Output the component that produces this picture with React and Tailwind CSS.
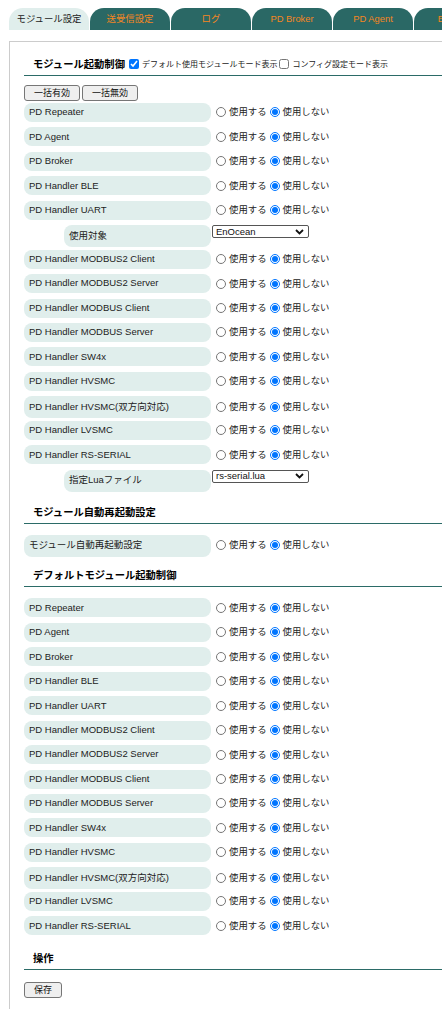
import React from 'react';

const tabs = ['モジュール設定', '送受信設定', 'ログ', 'PD Broker', 'PD Agent', 'BACnet'];

const startupRows = [
  { label: 'PD Repeater' },
  { label: 'PD Agent' },
  { label: 'PD Broker' },
  { label: 'PD Handler BLE' },
  { label: 'PD Handler UART' },
  { label: '使用対象', select: 'EnOcean' },
  { label: 'PD Handler MODBUS2 Client' },
  { label: 'PD Handler MODBUS2 Server' },
  { label: 'PD Handler MODBUS Client' },
  { label: 'PD Handler MODBUS Server' },
  { label: 'PD Handler SW4x' },
  { label: 'PD Handler HVSMC' },
  { label: 'PD Handler HVSMC(双方向対応)' },
  { label: 'PD Handler LVSMC' },
  { label: 'PD Handler RS-SERIAL' },
  { label: '指定Luaファイル', select: 'rs-serial.lua' },
];

const defaultRows = [
  'PD Repeater',
  'PD Agent',
  'PD Broker',
  'PD Handler BLE',
  'PD Handler UART',
  'PD Handler MODBUS2 Client',
  'PD Handler MODBUS2 Server',
  'PD Handler MODBUS Client',
  'PD Handler MODBUS Server',
  'PD Handler SW4x',
  'PD Handler HVSMC',
  'PD Handler HVSMC(双方向対応)',
  'PD Handler LVSMC',
  'PD Handler RS-SERIAL',
];

const isWide = (s) => /[^\x00-\x7f]/.test(s);

function Radios({ name }) {
  return (
    <div className="flex items-center text-[9.4px] text-[#222]">
      <input type="radio" name={name} className="ml-[5px] w-[10px] h-[10px] m-0" />
      <span className="ml-[3px]">使用する</span>
      <input type="radio" name={name} defaultChecked className="ml-[3px] w-[10px] h-[10px] m-0" />
      <span className="ml-[3px]">使用しない</span>
    </div>
  );
}

function Row({ label, name }) {
  const tall = isWide(label);
  return (
    <div className={tall ? 'pb-[2.45px]' : 'pb-[5.45px]'}>
      <div className="flex items-center">
        <div className={`w-[187px] ${tall ? 'h-[22px]' : 'h-[19px]'} rounded-[8px] bg-[#e0eeec] flex items-center pl-[5px] text-[9.5px] text-[#222]`}>
          {label}
        </div>
        <Radios name={name} />
      </div>
    </div>
  );
}

function SelectRow({ label, value }) {
  return (
    <div className="pb-[2.45px] flex items-start">
      <div className="ml-[40px] w-[147px] h-[22px] rounded-[8px] bg-[#e0eeec] flex items-center pl-[5px] text-[9.5px] text-[#222]">
        {label}
      </div>
      <div className="ml-[1px] w-[97px] h-[13px] border border-[#555] rounded-[2px] bg-white flex items-center justify-between pl-[3px] pr-[4px] text-[9.5px] text-[#111] leading-none">
        <span>{value}</span>
        <svg width="9" height="6" viewBox="0 0 9 6">
          <path d="M1 1l3.5 3.5L8 1" fill="none" stroke="#111" strokeWidth="1.8" />
        </svg>
      </div>
    </div>
  );
}

function Heading({ children, className = '' }) {
  return (
    <div className={`pl-[9px] pb-[3px] border-b border-[#2b6b67] flex items-center text-[10.3px] leading-[14px] ${className}`}>
      {children}
    </div>
  );
}

function Btn({ children }) {
  return (
    <button className="h-[16px] px-[9px] border border-[#767676] rounded-[3px] bg-[#efefef] text-[9px] leading-none text-[#111]">
      {children}
    </button>
  );
}

export default function App() {
  return (
    <div className="w-[442px] h-[1009px] overflow-hidden bg-white font-['Liberation_Sans','Noto_Sans_CJK_JP',sans-serif]">
      <div className="w-[640px] pt-[8px]">
        {/* tabs */}
        <div className="flex ml-[9px] gap-[1px]">
          {tabs.map((t, i) => (
            <div
              key={t}
              className={`w-[80px] h-[22px] rounded-t-[14px] flex items-center justify-center text-[9.4px] ${
                i === 0 ? 'bg-[#e0eeec] text-[#222]' : 'bg-[#2a6865] text-[#f5861f]'
              }`}
            >
              {t}
            </div>
          ))}
        </div>

        {/* panel */}
        <div className="ml-[9px] mt-[11px] border border-[#cccccc] pl-[14px] pt-[16px] pb-[24px]">
          <Heading>
            <span className="font-bold">モジュール起動制御</span>
            <input type="checkbox" defaultChecked className="ml-[4px] mb-[3px] w-[10px] h-[10px] m-0" />
            <span className="ml-[3px] text-[8px] text-[#222]">デフォルト使用モジュールモード表示</span>
            <input type="checkbox" className="ml-[2px] mb-[3px] w-[10px] h-[10px] m-0" />
            <span className="ml-[3px] text-[8px] text-[#222]">コンフィグ設定モード表示</span>
          </Heading>

          <div className="mt-[9px] flex gap-[2px]">
            <Btn>一括有効</Btn>
            <Btn>一括無効</Btn>
          </div>

          <div className="mt-[2px]">
            {startupRows.map((r, i) =>
              r.select ? (
                <SelectRow key={i} label={r.label} value={r.select} />
              ) : (
                <Row key={i} label={r.label} name={`s${i}`} />
              )
            )}
          </div>

          <Heading className="mt-[11.5px] font-bold">モジュール自動再起動設定</Heading>
          <div className="mt-[11px]">
            <Row label="モジュール自動再起動設定" name="restart" />
          </div>

          <Heading className="mt-[10px] font-bold">デフォルトモジュール起動制御</Heading>
          <div className="mt-[11.5px]">
            {defaultRows.map((l, i) => (
              <Row key={i} label={l} name={`d${i}`} />
            ))}
          </div>

          <Heading className="mt-[11px] font-bold">操作</Heading>
          <div className="mt-[6px]">
            <Btn>保存</Btn>
          </div>
        </div>
      </div>
    </div>
  );
}
